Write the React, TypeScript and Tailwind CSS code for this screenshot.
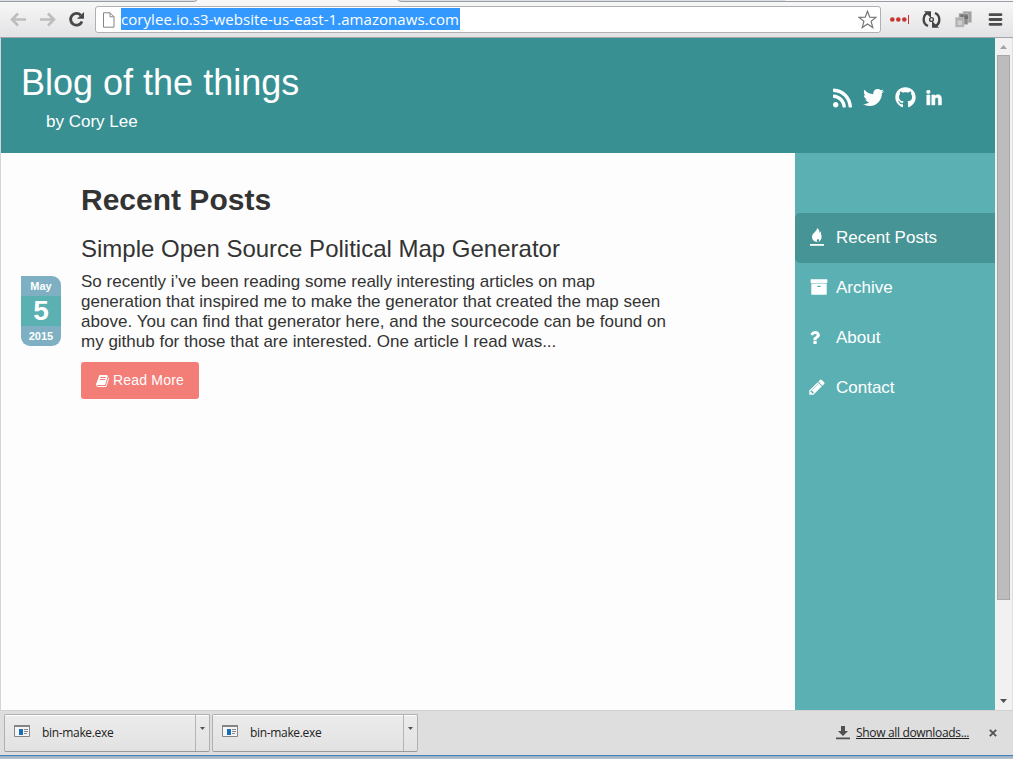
import type { ReactNode } from "react";
import { FaRss, FaTwitter, FaGithub, FaLinkedinIn } from "react-icons/fa";

const ui = "font-['Open_Sans','Noto_Sans',sans-serif]";

function Glyph({ d, className, viewBox = "0 0 1792 1792" }: { d: string; className: string; viewBox?: string }) {
  return (
    <svg viewBox={viewBox} className={className} fill="currentColor">
      <path d={d} />
    </svg>
  );
}

const BOOK =
  "M1639 478q40 57 18 129l-275 906q-19 64-76.5 107.5t-122.5 43.5h-923q-77 0-148.5-53.5t-99.5-131.5q-24-67-2-127 0-4 3-27t4-37q1-8-3-21.5t-3-19.5q2-11 8-21t16.5-23.5 16.5-23.5q23-38 45-91.5t30-91.5q3-10 .5-30t-.5-28q3-11 17-28t17-23q21-36 42-92t25-90q1-9-2.5-32t.5-28q4-13 22-30.5t22-22.5q19-26 42.5-84.5t27.5-96.5q1-8-3-25.5t-2-26.5q2-8 9-18t18-23 17-21q8-12 16.5-30.5t15-35 16-36 19.5-32 26.5-23.5 36-11.5 47.5 5.5l-1 3q38-9 51-9h761q74 0 114 56t18 130l-274 906q-36 119-71.5 153.5t-128.5 34.5h-869q-27 0-38 15-11 16-1 43 24 70 144 70h923q29 0 56-15.5t35-41.5l300-987q7-22 5-57 38 15 59 43zm-1064 2q-4 13 2 22.5t20 9.5h608q13 0 25.5-9.5t16.5-22.5l21-64q4-13-2-22.5t-20-9.5h-608q-13 0-25.5 9.5t-16.5 22.5zm-83 256q-4 13 2 22.5t20 9.5h608q13 0 25.5-9.5t16.5-22.5l21-64q4-13-2-22.5t-20-9.5h-608q-13 0-25.5 9.5t-16.5 22.5z";
const PENCIL =
  "M491 1536l91-91-235-235-91 91v107h128v128h107zm523-928q0-22-22-22-10 0-17 7l-542 542q-7 7-7 17 0 22 22 22 10 0 17-7l542-542q7-7 7-17zm-54-192l416 416-832 832h-416v-416zm683 96q0 53-37 90l-166 166-416-416 166-165q36-38 90-38 53 0 91 38l235 234q37 39 37 91z";
const ARCHIVE =
  "M1088 832q0-26-19-45t-45-19h-256q-26 0-45 19t-19 45 19 45 45 19h256q26 0 45-19t19-45zm576-192v960q0 26-19 45t-45 19h-1408q-26 0-45-19t-19-45v-960q0-26 19-45t45-19h1408q26 0 45 19t19 45zm64-448v256q0 26-19 45t-45 19h-1536q-26 0-45-19t-19-45v-256q0-26 19-45t45-19h1536q26 0 45 19t19 45z";
const QUESTION =
  "M704 1192v240q0 16-12 28t-28 12h-240q-16 0-28-12t-12-28v-240q0-16 12-28t28-12h240q16 0 28 12t12 28zm316-600q0 54-15.5 101t-35 76.5-55 59.5-57.5 43.5-61 35.5q-41 23-68.5 65t-27.5 67q0 17-12 32.5t-28 15.5h-240q-15 0-25.5-18.5t-10.5-37.5v-45q0-83 65-156.5t143-108.5q59-27 84-56t25-76q0-42-46.5-74t-107.5-32q-65 0-108 29-35 25-107 115-13 16-31 16-12 0-25-8l-164-125q-13-10-15.5-25t5.5-28q160-266 464-266 80 0 161 31t146 83 106 127.5 41 158.5z";

function Toolbar() {
  return (
    <div className="flex h-[38px] shrink-0 flex-col border-b border-[#a5a5a9] bg-linear-to-b from-[#f8f8f8] to-[#e3e3e6]">
      <svg className="h-[3px] w-full shrink-0" viewBox="0 0 1013 3">
        <path d="M0 0H197L195 1.5H0ZM398 0H592L591 1.5H401ZM592 0H786L784 1.5H593Z" fill="#dcdfe6" />
        <path d="M0 1.5H193Q196 1.5 197 0M398 0Q399 1.5 402 1.5H1013" fill="none" stroke="#9a9da3" />
      </svg>
      <div className="flex h-[34px] items-center">
        <div className="flex w-[95px] items-center pl-2.5">
          <svg className="h-[34px] w-[80px]" viewBox="10 3 80 34" fill="none">
            <path d="M26 19.5H13M18 13.5L12 19.5L18 25.5" stroke="#bdbdbd" strokeWidth="2.6" />
            <path d="M40 19.5H53M48 13.5L54 19.5L48 25.5" stroke="#bdbdbd" strokeWidth="2.6" />
            <path d="M80.8 15.2A5.9 5.9 0 1 0 82 21.5" stroke="#484848" strokeWidth="2.8" />
            <path d="M84 12V18.8H77Z" fill="#484848" />
          </svg>
        </div>
        <div className="mb-px flex h-[27px] w-[786px] items-center rounded-[3px] border border-[#b0b0b4] bg-white pl-1.5">
          <svg className="mr-[6px] h-4 w-[13px]" viewBox="0 0 13 16" fill="#fff" stroke="#858585" strokeWidth="1">
            <path d="M1.5.8H8L12 4.8V15.2H1.5ZM8 .8V4.8H12" />
          </svg>
          <span className={`${ui} mb-px block h-[22px] w-[339px] whitespace-nowrap bg-[#3399fe] text-[15px] leading-[23px] tracking-[0.06px] text-white`}>
            corylee.io.s3-website-us-east-1.amazonaws.com
          </span>
          <svg className="ml-auto mr-[3px] h-[19px] w-[19px]" viewBox="0 0 19 19" fill="#fff" stroke="#757575" strokeWidth="1.2">
            <path d="M9.5 1.2L11.8 7.1L18 7.4L13.1 11.3L14.8 17.5L9.5 14L4.2 17.5L5.9 11.3L1 7.4L7.2 7.1Z" />
          </svg>
        </div>
        <svg className="h-[34px] w-[132px]" viewBox="881 3 132 34">
          <g fill="#c93430">
            <circle cx="892.3" cy="19.5" r="2.3" />
            <circle cx="898.3" cy="19.5" r="2.3" />
            <circle cx="904.3" cy="19.5" r="2.3" />
            <path d="M908 15H909V24H908Z" />
          </g>
          <g fill="none" stroke="#444" strokeWidth="2.4">
            <path d="M928.5 12.6A7.2 7.2 0 0 0 928 26" />
            <path d="M934.5 26.4A7.2 7.2 0 0 0 935 13" />
          </g>
          <path d="M924 11.2H931V18ZM939 27.8H932V21Z" fill="#444" />
          <circle cx="931.5" cy="19.5" r="1.9" fill="none" stroke="#444" strokeWidth="1.4" />
          <g stroke="#c4c4c4" strokeWidth=".7">
            <path d="M963 11.5H971.5V22.5H963Z" fill="#a2a2a2" />
            <path d="M959 13.5H968V24.5H959Z" fill="#8a8a8a" />
            <path d="M955.5 17.5H964V27H955.5Z" fill="#b0b0b0" />
          </g>
          <path d="M957.5 20.5H962V25H957.5Z" fill="#cfcfcf" />
          <path d="M964.5 15.5H968V19H964.5ZM961 15H963V17H961Z" fill="#6f6f6f" />
          <path d="M990 14.7H1001M990 19.5H1001M990 24.3H1001" stroke="#4c4c4c" strokeWidth="2.8" strokeLinecap="round" />
        </svg>
      </div>
    </div>
  );
}

function NavItem({ icon, label, active }: { icon: ReactNode; label: string; active?: boolean }) {
  return (
    <li className={`flex h-[50px] items-center rounded-l-[5px] pl-[15px] text-[17px] text-white ${active ? "bg-[#469496]" : ""}`}>
      <span className="mb-[2px] flex w-[26px] shrink-0">{icon}</span>
      <span>{label}</span>
    </li>
  );
}

function Download() {
  return (
    <div className="mb-px flex h-[38px] w-[206px] rounded-[2px] border border-[#b0b0b0] border-b-[#999] bg-linear-to-b from-[#ececec] to-[#e2e2e2] shadow-[inset_0_1px_0_#fff]">
      <div className="flex w-[191px] items-center border-r border-[#b5b5b5] pl-[9px]">
        <svg className="mb-[3px] h-3 w-4" viewBox="0 0 16 12">
          <path d="M.5.5H15.5V11.5H.5Z" fill="#f5f5f5" stroke="#858585" />
          <path d="M0 0H16V2H0Z" fill="#858585" />
          <path d="M5 4H9V10H5Z" fill="#1670b8" />
          <path d="M10 4.5H14M10 6.5H14M10 8.5H13" stroke="#858585" />
        </svg>
        <span className={`${ui} ml-3 pt-px text-[12px] tracking-[-0.33px] text-[#222]`}>bin-make.exe</span>
      </div>
      <svg className="mt-3 ml-1 h-[3px] w-[5px]" viewBox="0 0 5 3">
        <path d="M0 0H5L2.5 3Z" fill="#555" />
      </svg>
    </div>
  );
}

export default function App() {
  return (
    <div className="flex h-[759px] w-[1013px] flex-col overflow-hidden bg-[#dedede] font-['Liberation_Sans',Arial,sans-serif]">
      <Toolbar />
      <div className="flex h-[672px] shrink-0 border-l border-[#d5d5d5] bg-[#fdfdfd]">
        <div className="flex w-[994px] flex-col">
          <header className="flex h-[115px] shrink-0 justify-between bg-[#389093] text-white">
            <div className="pl-5 pt-[22px]">
              <h1 className="mb-px text-[36px] leading-[46px]">Blog of the things</h1>
              <p className="pl-[25px] text-[17px] leading-[30px]">by Cory Lee</p>
            </div>
            <div className="flex w-[162px] items-center pt-[4px]">
              <FaRss className="h-[22px] w-[19px]" />
              <FaTwitter className="ml-[11px] h-[21px] w-[21px]" />
              <FaGithub className="ml-[11px] h-[21px] w-[21px]" />
              <FaLinkedinIn className="mt-px ml-[10px] h-[17px] w-4" stroke="currentColor" strokeWidth="18" />
            </div>
          </header>
          <div className="flex flex-1">
            <main className="w-[794px] pt-[30px] text-[#333]">
              <h2 className="pl-20 text-[30px] leading-[34px] font-bold">Recent Posts</h2>
              <h3 className="mt-[16px] pl-20 text-[24px] leading-[32px]">Simple Open Source Political Map Generator</h3>
              <div className="mt-[7px] flex pl-5">
                <div className="mt-1 h-[70px] w-10 shrink-0 overflow-hidden rounded-tr-[9px] rounded-b-[9px] bg-[#7eafc2] text-center font-bold text-white">
                  <div className="h-5 text-[11px] leading-[21px]">May</div>
                  <div className="h-[30px] bg-[#5bb0b2] text-[28px] leading-[30px]">5</div>
                  <div className="h-5 text-[11px] leading-[20px]">2015</div>
                </div>
                <div className="ml-5">
                  <p className="text-[17px] leading-[20px] whitespace-nowrap">
                    So recently i’ve been reading some really interesting articles on map
                    <br />
                    generation that inspired me to make the generator that created the map seen
                    <br />
                    <span className="tracking-[0.025px]">
                      above. You can find that generator here, and the sourcecode can be found on
                    </span>
                    <br />
                    my github for those that are interested. One article I read was...
                  </p>
                  <button className="mt-[10px] flex h-[37px] w-[118px] items-center rounded-[3px] bg-[#f37d77] pl-[15px] text-[14px] text-white">
                    <Glyph d={BOOK} className="mr-[3px] h-[14px] w-[14px]" />
                    <span className="tracking-[0.2px]">Read More</span>
                  </button>
                </div>
              </div>
            </main>
            <aside className="w-[200px] bg-[#5bb0b4] pt-[60px]">
              <ul>
                <NavItem
                  active
                  label="Recent Posts"
                  icon={
                    <svg className="h-[18px] w-[14px]" viewBox="0 0 14 18" fill="currentColor">
                      <path d="M7 0C7.3 3.2 2 5 2 9C2 11.8 4 13.6 7.4 14.3C6.5 13.2 6.6 12.2 7.8 11.1C9.8 11.5 9.2 13 8.4 14.2C11 12.6 12.3 9.8 11.3 7C10.8 5.6 10.7 4.8 11.3 3.6C10.3 3.9 9.8 4.4 9.5 5.3C9.7 3 9 1.2 7 0Z" />
                      <path d="M0 16H14V17.8H0Z" />
                    </svg>
                  }
                />
                <NavItem label="Archive" icon={<Glyph d={ARCHIVE} className="h-[18px] w-[18px]" />} />
                <NavItem label="About" icon={<Glyph d={QUESTION} viewBox="56 192 970 1280" className="h-[13px] w-[10px]" />} />
                <NavItem label="Contact" icon={<Glyph d={PENCIL} className="-ml-[2px] h-[18px] w-[18px]" />} />
              </ul>
            </aside>
          </div>
        </div>
        <div className="flex w-[18px] flex-col items-center border-r border-[#e0e0e0] bg-[#f1f1f1]">
          <svg className="h-[17px] w-[17px] shrink-0" viewBox="0 0 17 17">
            <path d="M5 11L8.5 7L12 11Z" fill="#a3a3a3" />
          </svg>
          <div className="h-[545px] w-[13px] border border-[#a8a8a8] bg-[#bcbcbc]" />
          <svg className="mt-auto h-[17px] w-[17px] shrink-0" viewBox="0 0 17 17">
            <path d="M5 6H12L8.5 10Z" fill="#505050" />
          </svg>
        </div>
      </div>
      <div className="flex h-[45px] shrink-0 items-center gap-0.5 border-t border-[#d2d2d2] bg-[#dedede] pl-1">
        <Download />
        <Download />
        <svg className="ml-[416px] h-[14px] w-[14px]" viewBox="0 0 14 14" fill="#505050">
          <path d="M5 0H9V5H12L7 10L2 5H5ZM0 11.5H14V13.3H0Z" />
        </svg>
        <span className={`${ui} ml-1 w-[113px] whitespace-nowrap text-[12px] tracking-[-0.33px] text-[#222] underline`}>
          Show all downloads...
        </span>
        <svg className="ml-[18px] h-[8px] w-[8px]" viewBox="0 0 8 8" stroke="#505050" strokeWidth="1.8">
          <path d="M.8.8L7.2 7.2M7.2.8L.8 7.2" />
        </svg>
      </div>
      <div className="h-px shrink-0 bg-[#3f82bd]" />
      <div className="h-[3px] shrink-0 bg-linear-to-b from-[#9eacbb] to-[#b9c5d2]" />
    </div>
  );
}
